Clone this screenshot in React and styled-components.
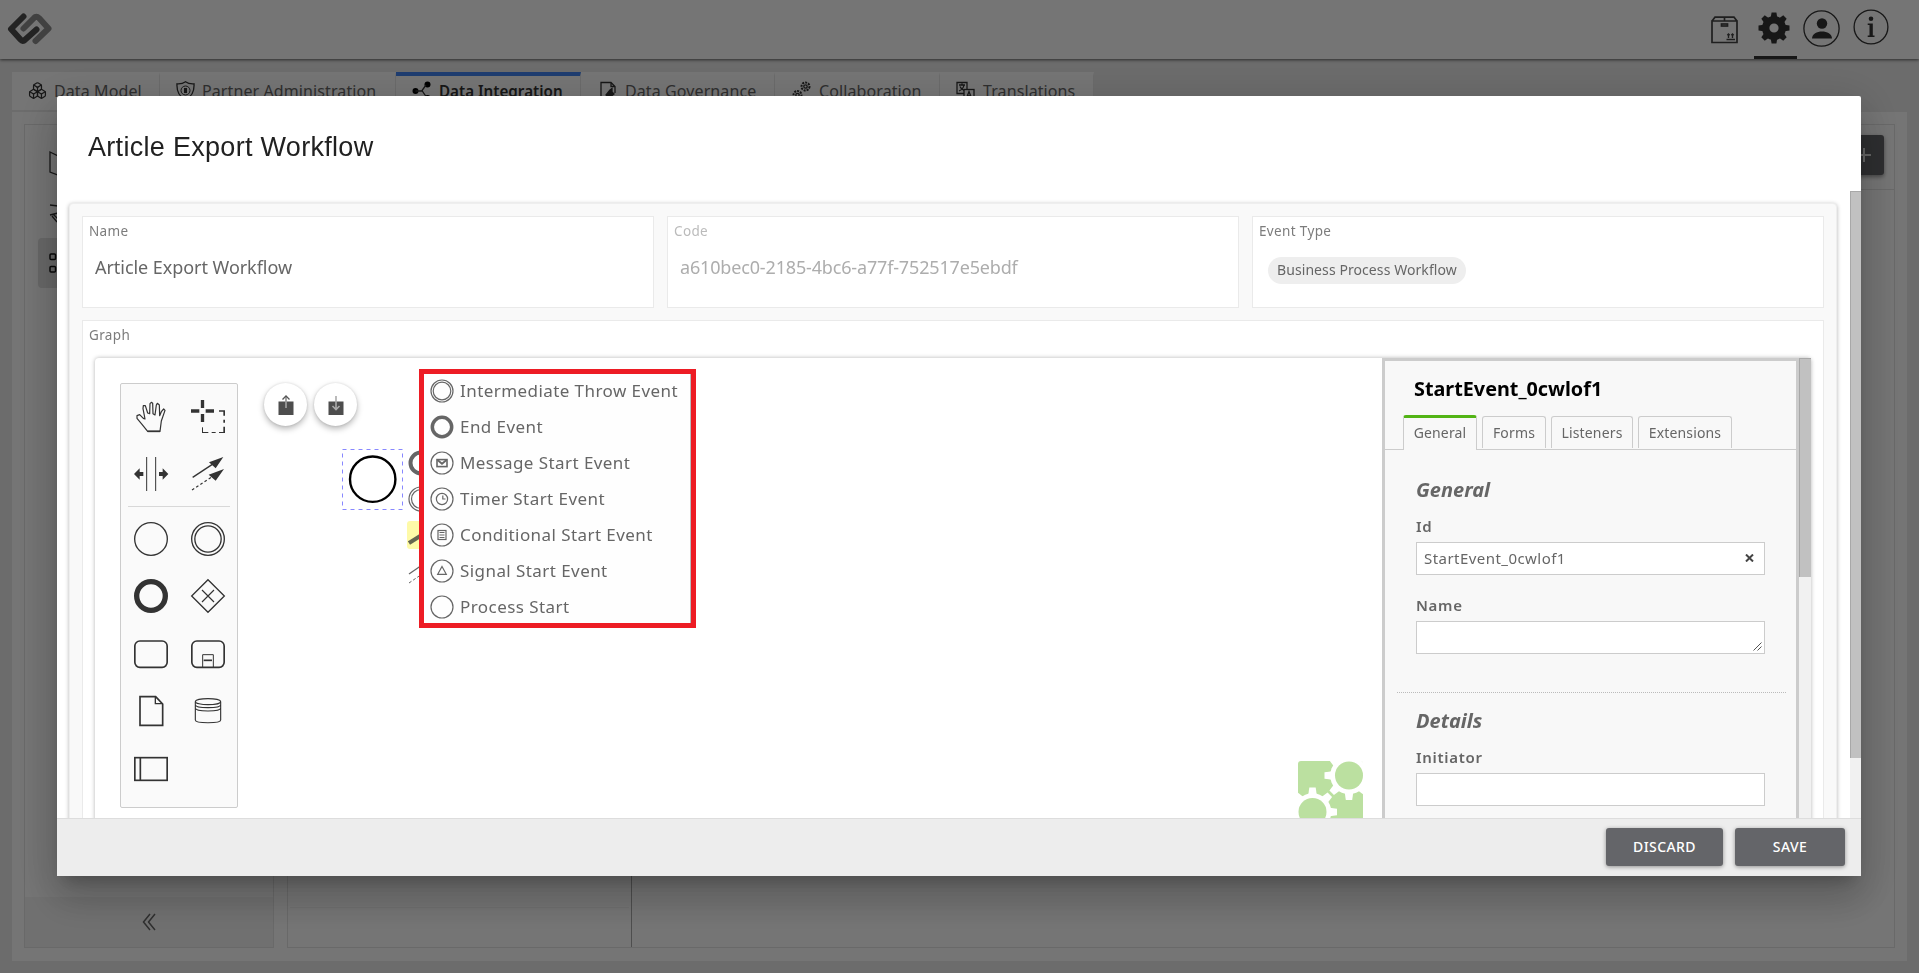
import React from 'react';
import styled, { createGlobalStyle, css } from 'styled-components';
import { Boxes } from 'lucide-react';

const GlobalStyle = createGlobalStyle`
  *, *::before, *::after { box-sizing: border-box; }
  html, body { margin: 0; padding: 0; overflow: hidden; }
  body { font-family: "Noto Sans", "Open Sans", sans-serif; color: #666; background: #ebebeb; }
  svg { display: block; flex: none; }
`;

/* ---------- page behind the dialog ---------- */
const Page = styled.div`
  height: 973px;
  display: flex;
  flex-direction: column;
`;
const TopBar = styled.header`
  height: 59px;
  flex: none;
  display: flex;
  align-items: stretch;
  background: #fff;
  padding: 0 23px 0 7px;
  box-shadow: 0 1px 3px rgba(0, 0, 0, 0.6);
  z-index: 1;
`;
const Brand = styled.div`
  flex: 1;
  padding-top: 12px;
`;
const TopAction = styled.div`
  width: ${(p) => p.$w}px;
  padding: ${(p) => p.$top}px ${(p) => (p.$active ? 4 : 0)}px 0 0;
  display: flex;
  justify-content: center;
  align-items: flex-start;
  border-bottom: 3px solid ${(p) => (p.$active ? '#333' : 'transparent')};
`;
const TabStrip = styled.nav`
  display: flex;
  height: 38px;
  margin: 13px 12px 2px;
  flex: none;
`;
const PageTab = styled.div`
  width: ${(p) => p.$w}px;
  padding-left: ${(p) => p.$pad || 16}px;
  display: flex;
  gap: ${(p) => p.$gap || 8}px;
  background: #fff;
  border-right: 1px solid #e8e8e8;
  border-top: 4px solid ${(p) => (p.$active ? '#4285f4' : '#fff')};
  font-size: ${(p) => (p.$active ? 15.2 : 16)}px;
  letter-spacing: ${(p) => (p.$active ? 0 : 0.1)}px;
  line-height: 22px;
  white-space: nowrap;
  padding-top: 4px;
  ${(p) => p.$active && css`font-weight: 600; color: #333;`}
`;
const TabIcon = styled.span`
  padding-top: 1px;
  color: #333;
`;
const PageBody = styled.main`
  flex: 1;
  margin: 0 12px 12px;
  background: #fff;
  padding: 12px 12px 13px;
  display: flex;
  gap: 13px;
`;
const SideNav = styled.aside`
  width: 250px;
  border: 1px solid #e5e5e5;
  display: flex;
  flex-direction: column;
`;
const NavItem = styled.div`
  height: 50px;
  margin: 0 13px;
  padding-left: 11px;
  display: flex;
  align-items: center;
  border-radius: 4px;
  background: ${(p) => (p.$selected ? '#e2e2e2' : 'transparent')};
`;
const NavList = styled.div`
  flex: 1;
  padding-top: 13px;
`;
const Collapse = styled.div`
  height: 50px;
  background: #f5f5f5;
  display: flex;
  align-items: center;
  justify-content: center;
`;
const Workspace = styled.section`
  flex: 1;
  border: 1px solid #e5e5e5;
  display: flex;
  flex-direction: column;
`;
const WorkspaceBar = styled.div`
  height: 65px;
  border-bottom: 1px solid #e5e5e5;
  display: flex;
  justify-content: flex-end;
  padding: 10px 10px 0;
`;
const AddButton = styled.div`
  width: 40px;
  height: 40px;
  border-radius: 3px;
  background: #646569;
  display: flex;
  align-items: center;
  justify-content: center;
  box-shadow: 0 2px 4px rgba(0, 0, 0, 0.4);
`;
const WorkspaceSplit = styled.div`
  flex: 1;
  display: flex;
`;
const ListPane = styled.div`
  width: 344px;
  border-right: 1px solid #aaa;
  display: flex;
  flex-direction: column;
  justify-content: flex-end;
`;
const ListFooter = styled.div`
  height: 40px;
  margin: 0 2px;
  border-top: 1px solid #f3f3f3;
`;

/* ---------- dialog ---------- */
const Overlay = styled.div`
  position: fixed;
  inset: 0;
  z-index: 5;
  background: rgba(0, 0, 0, 0.54);
  padding: 96px 58px 97px 57px;
`;
const Dialog = styled.div`
  height: 780px;
  background: #fff;
  border-radius: 2px 2px 0 0;
  display: flex;
  flex-direction: column;
  box-shadow: 0 11px 15px -7px rgba(0, 0, 0, 0.2), 0 24px 38px 3px rgba(0, 0, 0, 0.14), 0 9px 46px 8px rgba(0, 0, 0, 0.12);
`;
const DialogTitle = styled.h2`
  margin: 0;
  height: 95px;
  padding: 36px 0 0 31px;
  font: 400 27px/30px "Liberation Sans", Arial, sans-serif;
  letter-spacing: 0.3px;
  color: #212121;
`;
const DialogBody = styled.div`
  flex: 1;
  min-height: 0;
  display: flex;
`;
const Scrolled = styled.div`
  flex: 1;
  overflow: hidden;
  padding: 12px 13px 0 12px;
`;
const ScrollTrack = styled.div`
  width: ${(p) => p.$w}px;
  flex: none;
  background: #f1f1f1;
`;
const ScrollThumb = styled.div`
  height: ${(p) => p.$h}px;
  background: #c1c1c1;
  box-shadow: inset 1px 1px 0 #a8a8a8;
`;
const Card = styled.div`
  height: 800px;
  background: #f9f9f9;
  border: 1px solid #eee;
  border-radius: 4px;
  padding: 12px;
  box-shadow: 0 1px 4px rgba(0, 0, 0, 0.3);
`;
const FieldRow = styled.div`
  display: flex;
  gap: 13px;
  margin-bottom: 12px;
`;
const Field = styled.div`
  flex: 1;
  height: ${(p) => p.$h || 92}px;
  background: #fff;
  border: 1px solid #eaeaea;
  padding: 4px 6px 0;
  color: ${(p) => (p.$disabled ? '#adadad' : '#666')};
`;
const FieldLabel = styled.div`
  font-size: 13.5px;
  line-height: 21px;
  letter-spacing: 0.35px;
  color: ${(p) => (p.$disabled ? '#bbb' : '#7c7c7c')};
`;
const FieldValue = styled.div`
  margin: 13px 0 0 6px;
  font-size: 18px;
  line-height: 24px;
  letter-spacing: ${(p) => (p.$code ? -0.16 : -0.05)}px;
`;
const Chip = styled.span`
  display: inline-block;
  margin: 15px 0 0 9px;
  height: 27px;
  padding: 0 9px;
  border-radius: 14px;
  background: #eee;
  font-size: 14px;
  line-height: 26px;
  letter-spacing: 0.08px;
`;
const Footer = styled.footer`
  height: 58px;
  flex: none;
  border-top: 1px solid #ddd;
  background: #ededed;
  display: flex;
  justify-content: flex-end;
  gap: 12px;
  padding: 9px 16px 0;
`;
const Button = styled.button`
  width: ${(p) => p.$w}px;
  height: 38px;
  border: 0;
  border-radius: 3px;
  background: #646569;
  color: #fff;
  font: 500 14px/36px "Noto Sans", sans-serif;
  letter-spacing: 0.4px;
  padding: 0;
  box-shadow: 0 1px 4px rgba(0, 0, 0, 0.4);
`;

/* ---------- diagram editor ---------- */
const Editor = styled.div`
  height: 640px;
  margin: 12px 6px 0;
  display: flex;
  background: #fff;
  border-radius: 4px;
  box-shadow: 0 0 4px rgba(0, 0, 0, 0.3);
`;
const Canvas = styled.div`
  flex: 1;
  position: relative;
`;
const Palette = styled.div`
  position: absolute;
  left: 25px;
  top: 25px;
  width: 118px;
  height: 425px;
  padding: 4px 1px;
  border: 1px solid #ccc;
  border-radius: 2px;
  background: #fafafa;
`;
const PaletteGrid = styled.div`
  display: grid;
  grid-template-columns: 57px 57px;
  grid-auto-rows: 57.5px;
  place-items: center;
`;
const PaletteRule = styled.hr`
  border: 0;
  height: 1px;
  background: #d8d8d8;
  margin: 3px 6px;
`;
const RoundButton = styled.div`
  position: absolute;
  left: ${(p) => p.$x}px;
  top: 25px;
  width: 43px;
  height: 43px;
  border-radius: 50%;
  background: #fff;
  display: flex;
  align-items: center;
  justify-content: center;
  box-shadow: 0 3px 6px rgba(0, 0, 0, 0.28), 0 0 3px rgba(0, 0, 0, 0.12);
`;
const StartNode = styled.div`
  position: absolute;
  left: 247px;
  top: 91px;
`;
const ContextPad = styled.div`
  position: absolute;
  left: 312px;
  top: 91px;
  display: flex;
  flex-direction: column;
  gap: 8px;
`;
const PadEntry = styled.div`
  width: 28px;
  height: 28px;
  border-radius: 3px;
  background: ${(p) => (p.$hot ? '#fefaa8' : 'transparent')};
  display: flex;
  align-items: center;
  justify-content: center;
`;
const Menu = styled.div`
  position: absolute;
  left: 324px;
  top: 11px;
  width: 277px;
  height: 259px;
  border: 5px solid #ed1c24;
  background: #fefefe;
  padding-left: 5.5px;
  box-shadow: inset -1px 0 0 #bbb;
`;
const MenuItem = styled.div`
  height: 36px;
  display: flex;
  align-items: center;
  gap: 6.5px;
  font-size: 17px;
  letter-spacing: 0.43px;
  white-space: nowrap;
  line-height: 34px;
  & > svg { margin-top: -3px; }
`;
const MenuText = styled.span`
  margin-top: -3px;
`;
const EngineLogo = styled.div`
  position: absolute;
  left: 1203px;
  top: 403px;
`;

/* ---------- properties panel ---------- */
const Properties = styled.div`
  width: 417px;
  border: 3px solid #ccc;
  background: #f8f8f8;
`;
const ElementName = styled.div`
  height: 54px;
  padding: 15px 0 0 29px;
  font-size: 19.8px;
  font-weight: 700;
  line-height: 26px;
  color: #000;
`;
const PropTabs = styled.div`
  height: 35px;
  display: flex;
  align-items: flex-end;
  gap: 5px;
  padding-left: 18px;
  border-bottom: 1px solid #ccc;
`;
const PropTab = styled.div`
  width: ${(p) => p.$w}px;
  height: 32px;
  margin-bottom: 1px;
  border: 1px solid #ccc;
  border-bottom: 0;
  border-radius: 3px 3px 0 0;
  text-align: center;
  font-size: 14px;
  line-height: 31px;
  letter-spacing: 0.15px;
  ${(p) => p.$active && css`
    height: 35px;
    margin-bottom: -1px;
    border-top: 3px solid #52b415;
    background: #f8f8f8;
    line-height: 29px;
  `}
`;
const Group = styled.div`
  margin: 0 10px 0 12px;
  padding: ${(p) => p.$top}px 19px 0;
  height: ${(p) => p.$h}px;
  border-bottom: 1px dotted #bbb;
`;
const GroupTitle = styled.div`
  font-size: 20px;
  font-weight: 700;
  font-style: italic;
  line-height: 28px;
  margin-bottom: 11px;
`;
const PropLabel = styled.div`
  font-size: 15px;
  font-weight: 600;
  letter-spacing: 0.7px;
  line-height: 22px;
  margin-bottom: 5px;
`;
const PropInput = styled.div`
  width: 349px;
  height: 33px;
  margin-bottom: 19px;
  border: 1px solid #ccc;
  background: #fff;
  display: flex;
  align-items: center;
  justify-content: space-between;
  padding: 0 10px 2px 7px;
  font-size: 15px;
  letter-spacing: 0.45px;
`;
const TextArea = styled(PropInput)`
  align-items: flex-end;
  justify-content: flex-end;
  padding: 0 2px 2px;
`;

/* ---------- drawings ---------- */
const Glyph = ({ size = 34, children, sw = 4 }) => (
  <svg width={size} height={size} viewBox="0 0 102 102" fill="none" stroke="#333" strokeWidth={sw} overflow="visible">
    {children}
  </svg>
);

const HandTool = () => (
  <Glyph sw={3.6}>
    <path d="M41 94H78L82 63L93 31L89 27L82 35L77 47L76 15L70 10L67 15L63 45L57 41L56 10L52 7L48 11L47 41L41 39L34 17L28 17L27 26L33 57L28 55L17 44L9 47L9 55L24 73Z" strokeLinejoin="round" />
    <path d="M41 94H78" strokeWidth="5" />
  </Glyph>
);
const LassoTool = () => (
  <Glyph>
    <path d="M0 33H25M44 33H69M34.500 0V24M34.500 42V66" strokeWidth="10" />
    <path d="M84 33H102M99.500 31V47M99.500 59V68M99.500 80V99" strokeWidth="5" />
    <path d="M33 97.500H52M62 97.500H74M84 97.500H102M34.500 82V99" strokeWidth="3" />
  </Glyph>
);
const SpaceTool = () => (
  <Glyph sw={3}>
    <path d="M38 0V102M65 0V102" />
    <path d="M0 51L17 34V45H28V57H17V68Z" fill="#333" stroke="none" />
    <path d="M103 51L86 34V45H75V57H86V68Z" fill="#333" stroke="none" />
  </Glyph>
);
const ConnectTool = () => (
  <Glyph sw={4}>
    <path d="M5 61L64 22" />
    <path d="M3 99L62 60" strokeDasharray="8 7" strokeWidth="3.500" />
    <path d="M97 0L54 16L74 34Z M99 36L53 53L74 71Z" fill="#333" stroke="none" />
  </Glyph>
);
const Ring = () => <Glyph><circle cx="51" cy="51" r="49" /></Glyph>;
const DoubleRing = () => <Glyph><circle cx="51" cy="51" r="49" /><circle cx="51" cy="51" r="39.500" /></Glyph>;
const ThickRing = () => <Glyph sw={16}><circle cx="51" cy="51" r="43" /></Glyph>;
const Gateway = () => (
  <Glyph><path d="M51 2L100 51L51 100L2 51Z" /><path d="M33 33L69 69M69 33L33 69" strokeWidth="3.500" /></Glyph>
);
const TaskShape = () => <Glyph sw={5}><rect x="2.500" y="12" width="97" height="79" rx="15" /></Glyph>;
const SubProcess = () => (
  <Glyph sw={5}>
    <rect x="2.500" y="12" width="97" height="79" rx="15" />
    <path d="M35 90V53H67V90" strokeWidth="3" />
    <path d="M38 70H63" />
  </Glyph>
);
const DataObject = () => (
  <Glyph sw={5}><path d="M18 8H65L86 30V94H18Z" /><path d="M64 8V29H86" strokeWidth="4" /></Glyph>
);
const DataStore = () => (
  <Glyph sw={3.4}>
    <ellipse cx="51" cy="23" rx="38" ry="9" />
    <path d="M13 23V78C13 89 89 89 89 78V23M13 32C13 44 89 44 89 32M13 42C13 54 89 54 89 42" />
  </Glyph>
);
const Participant = () => (
  <Glyph sw={5}><rect x="2.500" y="17" width="97" height="68" /><path d="M19 17V85" /></Glyph>
);

const MenuGlyph = ({ kind }) => (
  <svg width="24" height="24" viewBox="0 0 24 24" fill="none" stroke="#666" strokeWidth="1.200">
    {kind === 'end' ? <circle cx="12" cy="12" r="9.700" strokeWidth="3.500" /> : <circle cx="12" cy="12" r="11" />}
    {kind === 'throw' && <circle cx="12" cy="12" r="8.800" />}
    {kind === 'message' && (
      <><rect x="7" y="8.600" width="10" height="7" strokeWidth="1.600" /><path d="M7.500 9L12 12.800L16.500 9" strokeWidth="1.800" /></>
    )}
    {kind === 'timer' && (<><circle cx="12" cy="12" r="5.600" /><path d="M12.800 8.500V12H15.500" /></>)}
    {kind === 'conditional' && (<><rect x="8" y="7.500" width="8" height="9" /><path d="M9.500 9.500H14.500M9.500 12H14.500M9.500 14.500H14.500" /></>)}
    {kind === 'signal' && <path d="M12 7.500L16.300 15.300H7.700Z" />}
  </svg>
);

const TransferIcon = ({ down }) => (
  <svg width="16" height="22" viewBox="0 0 16 22" fill="none">
    <rect x="0.500" y="7.500" width="15" height="13.500" fill="#4d4d4d" />
    {down ? (
      <path d="M8 2V15M4.500 12L8 15.500L11.500 12" stroke="#aaa" strokeWidth="1.600" />
    ) : (
      <><path d="M8 2.500V14" stroke="#999" strokeWidth="1.800" /><path d="M4.500 5.500L8 2L11.500 5.500" stroke="#555" strokeWidth="1.300" /></>
    )}
  </svg>
);

const LogoMark = () => (
  <svg width="46" height="34" viewBox="0 0 46 34" fill="none" strokeLinejoin="round" strokeLinecap="round" strokeWidth="6">
    <path d="M28.500 29L41.500 16.500L32 6C30.200 4.200 28.500 4.200 27 6L16.500 16.500" stroke="#8f8f8f" />
    <path d="M16.500 4.500L4 17L13.500 27.500C15.200 29.300 16.500 29.300 18 27.800L29.500 17.500" stroke="#4c4c4c" />
  </svg>
);

const PackageIcon = () => (
  <svg width="27" height="28" viewBox="0 0 27 28" fill="none" stroke="#444" strokeWidth="1.700">
    <path d="M1 5H26V26.500H1ZM1 5L4 1.200H23L26 5M13.500 1V5" />
    <rect x="10.500" y="8" width="6" height="2" />
    <path d="M15.500 23.500H24M17.500 22V18M21.500 22V18M16.300 19.200L17.500 18L18.700 19.200M20.300 19.200L21.500 18L22.700 19.200" strokeWidth="1.400" />
  </svg>
);
const teeth = [0, 45, 90, 135, 180, 225, 270, 315];
const GearIcon = () => (
  <svg width="32" height="32" viewBox="-16 -16 32 32" fill="#333">
    <circle r="8.300" fill="none" stroke="#333" strokeWidth="7.400" />
    {teeth.map((a) => <path key={a} d="M-3.300 -10.500L-2.400 -15.500H2.400L3.300 -10.500Z" transform={`rotate(${a})`} />)}
  </svg>
);
const UserIcon = () => (
  <svg width="37" height="37" viewBox="0 0 37 37" fill="#333">
    <circle cx="18.500" cy="18.500" r="17.600" fill="none" stroke="#333" strokeWidth="1.300" />
    <circle cx="19" cy="13.500" r="5.200" />
    <path d="M9 28.500C9 19 29 19 29 28.500Z" />
  </svg>
);
const InfoIcon = () => (
  <svg width="36" height="36" viewBox="0 0 36 36" fill="#333">
    <circle cx="18" cy="18" r="16.900" fill="none" stroke="#333" strokeWidth="1.300" />
    <circle cx="18" cy="9.800" r="2.300" />
    <path d="M14.700 14.500H19.800V26.500H21.500V28H14.700V26.500H16.500V16H14.700Z" />
  </svg>
);

const SmallIcon = ({ children }) => (
  <svg width="19" height="19" viewBox="0 0 19 19" fill="none" stroke="#333" strokeWidth="1.300">{children}</svg>
);
const ShieldIcon = () => (
  <SmallIcon><path d="M9.500 0.800C12 2.600 15 3 18 2.800C18.500 11 15 16 9.500 18.500C4 16 0.500 11 1 2.800C4 3 7 2.600 9.500 0.800Z" /><circle cx="9.500" cy="9.500" r="4.500" strokeWidth="1" /><path d="M9.500 7V12" strokeWidth="3" /></SmallIcon>
);
const FlowIcon = () => (
  <SmallIcon><circle cx="3.500" cy="10" r="3" fill="#000" stroke="none" /><circle cx="15.500" cy="3.500" r="3" fill="#000" stroke="none" /><circle cx="15.500" cy="17" r="3" fill="#000" stroke="none" /><path d="M3.500 10H10M14 4L10 9.500L15 17" /></SmallIcon>
);
const FileShieldIcon = () => (
  <SmallIcon><path d="M9 18H2V1.500H12L16 5.500V12M12 1.500V5.500H16" /><path d="M11 9L13 7.500V11L15 13L10 17L7 14Z" fill="#333" /></SmallIcon>
);
const GearsIcon = () => (
  <SmallIcon><circle cx="13.500" cy="5.500" r="4" strokeDasharray="2 1" strokeWidth="2" /><circle cx="13.500" cy="5.500" r="1.700" /><circle cx="5.500" cy="14" r="4" strokeDasharray="2 1" strokeWidth="2" /><circle cx="5.500" cy="14" r="1.700" /></SmallIcon>
);
const TranslateIcon = () => (
  <SmallIcon><path d="M8 12.500H1V1.500H11V8M3 4H9M6 2.500V4M8 4C7.500 7 5 9 3 10M4 5.500C5 8 7 9 8 9.500" /><rect x="8" y="8.500" width="10" height="10" /><path d="M10.500 17L13 10.500L15.500 17M11.500 15H14.500" /></SmallIcon>
);

const EngineMark = () => (
  <svg width="65" height="65" viewBox="0 0 65 65">
    <defs><clipPath id="engine"><rect width="65" height="65" rx="3" /></clipPath></defs>
    <g clipPath="url(#engine)">
      <rect width="65" height="65" fill="#bbe0a0" />
      <rect x="37" y="-1" width="28" height="14" fill="#fff" />
      {[[51, 14.500], [14.500, 51]].map(([x, y]) => (
        <g key={x} transform={`translate(${x} ${y})`}>
          <circle r="18.800" fill="#fff" />
          {teeth.map((a) => <path key={a} d="M-4.200 -17L-3.200 -24.500H3.200L4.200 -17Z" fill="#fff" transform={`rotate(${a})`} />)}
          <circle r="14" fill="#bbe0a0" />
        </g>
      ))}
    </g>
  </svg>
);

const menuItems = [
  ['throw', 'Intermediate Throw Event'],
  ['end', 'End Event'],
  ['message', 'Message Start Event'],
  ['timer', 'Timer Start Event'],
  ['conditional', 'Conditional Start Event'],
  ['signal', 'Signal Start Event'],
  ['start', 'Process Start'],
];

export default function App() {
  return (
    <>
      <GlobalStyle />
      <Page>
        <TopBar>
          <Brand><LogoMark /></Brand>
          <TopAction $w={59} $top={16}><PackageIcon /></TopAction>
          <TopAction $w={43} $top={12} $active><GearIcon /></TopAction>
          <TopAction $w={49} $top={10}><UserIcon /></TopAction>
          <TopAction $w={50} $top={9}><InfoIcon /></TopAction>
        </TopBar>
        <TabStrip>
          <PageTab $w={148} $gap={7}><TabIcon><Boxes size={19} strokeWidth={1.6} /></TabIcon>Data Model</PageTab>
          <PageTab $w={236} $gap={7}><TabIcon><ShieldIcon /></TabIcon>Partner Administration</PageTab>
          <PageTab $w={185} $active><TabIcon><FlowIcon /></TabIcon>Data Integration</PageTab>
          <PageTab $w={194} $pad={18} $gap={7}><TabIcon><FileShieldIcon /></TabIcon>Data Governance</PageTab>
          <PageTab $w={165} $pad={17}><TabIcon><GearsIcon /></TabIcon>Collaboration</PageTab>
          <PageTab $w={154}><TabIcon><TranslateIcon /></TabIcon>Translations</PageTab>
        </TabStrip>
        <PageBody>
          <SideNav>
            <NavList>
              <NavItem>
                <svg width="26" height="26" fill="none" stroke="#333" strokeWidth="1.300"><path d="M1 2L9 6V25L1 22ZM9 6L17 3V22L9 25" /></svg>
              </NavItem>
              <NavItem>
                <svg width="26" height="22" fill="none" stroke="#333" strokeWidth="1.300"><path d="M1 3L9 4M1 13L9 11M3 14L8 20M4 12L12 20" /></svg>
              </NavItem>
              <NavItem $selected>
                <svg width="26" height="22" fill="none" stroke="#111" strokeWidth="1.500"><rect x="1" y="2" width="5.500" height="5.500" rx="1" /><rect x="1" y="14.500" width="5.500" height="5.500" rx="1" /></svg>
              </NavItem>
            </NavList>
            <Collapse>
              <svg width="14" height="18" fill="none" stroke="#666" strokeWidth="1.500"><path d="M8 1L1.500 9L8 17M13 1L6.500 9L13 17" /></svg>
            </Collapse>
          </SideNav>
          <Workspace>
            <WorkspaceBar>
              <AddButton><svg width="14" height="14" stroke="#ddd" strokeWidth="2"><path d="M7 0V14M0 7H14" /></svg></AddButton>
            </WorkspaceBar>
            <WorkspaceSplit>
              <ListPane><ListFooter /></ListPane>
            </WorkspaceSplit>
          </Workspace>
        </PageBody>
      </Page>

      <Overlay>
        <Dialog>
          <DialogTitle>Article Export Workflow</DialogTitle>
          <DialogBody>
            <Scrolled>
              <Card>
                <FieldRow>
                  <Field><FieldLabel>Name</FieldLabel><FieldValue>Article Export Workflow</FieldValue></Field>
                  <Field $disabled><FieldLabel $disabled>Code</FieldLabel><FieldValue $code>a610bec0-2185-4bc6-a77f-752517e5ebdf</FieldValue></Field>
                  <Field><FieldLabel>Event Type</FieldLabel><Chip>Business Process Workflow</Chip></Field>
                </FieldRow>
                <Field $h={690}>
                  <FieldLabel>Graph</FieldLabel>
                  <Editor>
                    <Canvas>
                      <Palette>
                        <PaletteGrid>
                          <HandTool /><LassoTool /><SpaceTool /><ConnectTool />
                        </PaletteGrid>
                        <PaletteRule />
                        <PaletteGrid>
                          <Ring /><DoubleRing /><ThickRing /><Gateway />
                          <TaskShape /><SubProcess /><DataObject /><DataStore /><Participant />
                        </PaletteGrid>
                      </Palette>
                      <RoundButton $x={169}><TransferIcon /></RoundButton>
                      <RoundButton $x={219}><TransferIcon down /></RoundButton>
                      <StartNode>
                        <svg width="62" height="62" fill="none">
                          <rect x="0.500" y="0.500" width="60" height="60" stroke="#8888ff" strokeDasharray="4 4" />
                          <circle cx="30.700" cy="30.200" r="22.700" stroke="#000" strokeWidth="2.400" />
                        </svg>
                      </StartNode>
                      <ContextPad>
                        <PadEntry><svg width="26" height="26" fill="none" stroke="#666"><circle cx="13" cy="13" r="10.500" strokeWidth="4" /></svg></PadEntry>
                        <PadEntry><svg width="26" height="26" fill="none" stroke="#666" strokeWidth="1.200"><circle cx="13" cy="13" r="12" /><circle cx="13" cy="13" r="9.500" /></svg></PadEntry>
                        <PadEntry $hot><svg width="26" height="26" fill="none" stroke="#666650"><path d="M1 21L17 11" strokeWidth="4" /></svg></PadEntry>
                        <PadEntry><svg width="26" height="26" fill="none" stroke="#666"><path d="M1 16L17 5" strokeWidth="1.300" /><path d="M1 25L17 14" strokeDasharray="3 2" /></svg></PadEntry>
                      </ContextPad>
                      <Menu>
                        {menuItems.map(([kind, text]) => (
                          <MenuItem key={kind}><MenuGlyph kind={kind} /><MenuText>{text}</MenuText></MenuItem>
                        ))}
                      </Menu>
                      <EngineLogo><EngineMark /></EngineLogo>
                    </Canvas>
                    <Properties>
                      <ElementName>StartEvent_0cwlof1</ElementName>
                      <PropTabs>
                        <PropTab $w={74} $active>General</PropTab>
                        <PropTab $w={64}>Forms</PropTab>
                        <PropTab $w={82}>Listeners</PropTab>
                        <PropTab $w={94}>Extensions</PropTab>
                      </PropTabs>
                      <Group $top={26} $h={243}>
                        <GroupTitle>General</GroupTitle>
                        <PropLabel>Id</PropLabel>
                        <PropInput>
                          StartEvent_0cwlof1
                          <svg width="9" height="8" stroke="#444" strokeWidth="2"><path d="M1 0.500L8 7.500M8 0.500L1 7.500" /></svg>
                        </PropInput>
                        <PropLabel>Name</PropLabel>
                        <TextArea><svg width="9" height="9" stroke="#555"><path d="M0.500 8.500L8.500 0.500M4.500 8.500L8.500 4.500" /></svg></TextArea>
                      </Group>
                      <Group $top={14} $h={260}>
                        <GroupTitle>Details</GroupTitle>
                        <PropLabel>Initiator</PropLabel>
                        <PropInput />
                      </Group>
                    </Properties>
                    <ScrollTrack $w={12}><ScrollThumb $h={219} /></ScrollTrack>
                  </Editor>
                </Field>
              </Card>
            </Scrolled>
            <ScrollTrack $w={11}><ScrollThumb $h={567} /></ScrollTrack>
          </DialogBody>
          <Footer>
            <Button $w={117}>DISCARD</Button>
            <Button $w={110}>SAVE</Button>
          </Footer>
        </Dialog>
      </Overlay>
    </>
  );
}
